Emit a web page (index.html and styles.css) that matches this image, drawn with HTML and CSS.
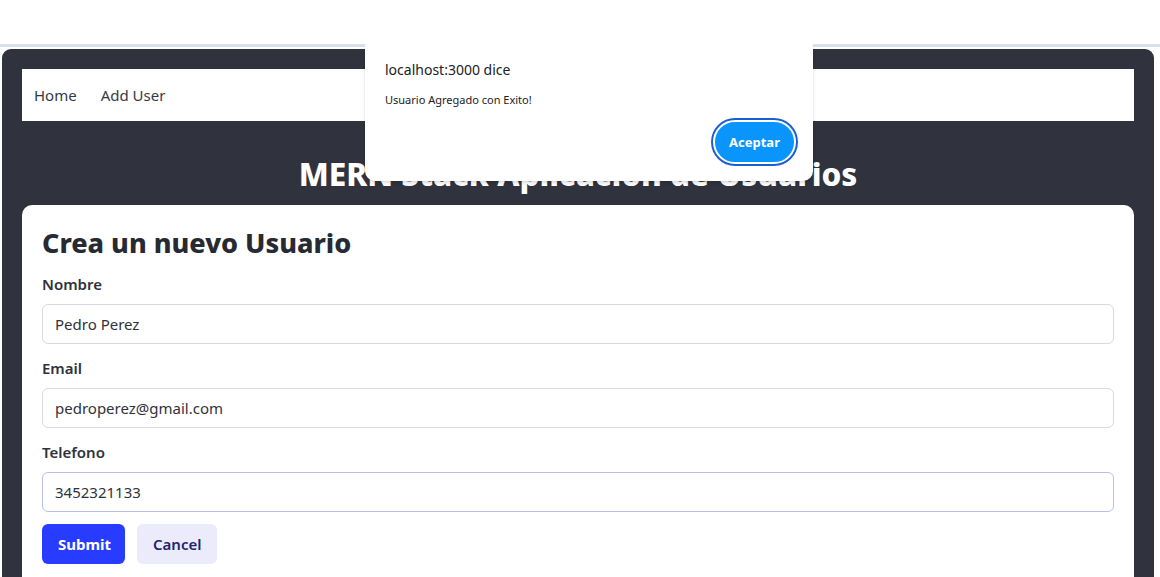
FILE: index.html
```html
<!DOCTYPE html>
<html lang="es">
<head>
<meta charset="utf-8">
<title>MERN Stack</title>
<link rel="stylesheet" href="styles.css">
</head>
<body>
<div class="browser-top"></div>
<div class="divider"></div>
<div class="app">
  <nav class="nav">
    <a class="nav-link" href="#">Home</a>
    <a class="nav-link" href="#">Add User</a>
  </nav>
  <h1 class="title">MERN Stack Aplicacion de Usuarios</h1>
  <div class="card">
    <h2 class="card-title">Crea un nuevo Usuario</h2>
    <form class="form">
      <div class="field">
        <label class="label">Nombre</label>
        <input class="input" type="text" value="Pedro Perez">
      </div>
      <div class="field">
        <label class="label">Email</label>
        <input class="input" type="text" value="pedroperez@gmail.com">
      </div>
      <div class="field">
        <label class="label">Telefono</label>
        <input class="input input-focus" type="text" value="3452321133">
      </div>
      <div class="actions">
        <button type="button" class="btn btn-primary">Submit</button>
        <button type="button" class="btn btn-secondary">Cancel</button>
      </div>
    </form>
  </div>
</div>

<div class="dialog">
  <div class="dialog-title">localhost:3000 dice</div>
  <div class="dialog-msg">Usuario Agregado con Exito!</div>
  <div class="dialog-actions">
    <button type="button" class="dialog-btn">Aceptar</button>
  </div>
</div>
</body>
</html>
```

FILE: styles.css
```css
* { box-sizing: border-box; }
html, body { margin: 0; padding: 0; background: #fff; }
body {
  font-family: "Noto Sans", "Open Sans", sans-serif;
  height: 577px;
  overflow: hidden;
  position: relative;
}
.browser-top { height: 44px; background: #fff; }
.divider { height: 3px; background: #d8e1ea; margin-bottom: 2px; }
.app {
  margin: 0 6px 0 2px;
  background: #30333e;
  border-radius: 9px 9px 0 0;
  padding: 20px 20px 0 20px;
  height: 540px;
}
.nav {
  background: #fff;
  height: 52px;
  display: flex;
  align-items: center;
  padding: 0 12px;
  gap: 24px;
}
.nav-link {
  color: #343a45;
  text-decoration: none;
  font-size: 15px;
}
.title {
  margin: 0;
  height: 84px;
  display: flex;
  align-items: center;
  justify-content: center;
  color: #fff;
  font-size: 31.5px;
  font-weight: 800;
  padding-top: 20px;
}
.card {
  background: #fff;
  border-radius: 10px 10px 0 0;
  padding: 20px;
  height: 380px;
}
.card-title {
  margin: 0 0 11px 0;
  font-size: 27px;
  line-height: 36px;
  font-weight: 800;
  color: #272a33;
}
.field { margin-bottom: 12px; }
.label {
  display: block;
  font-size: 15px;
  line-height: 24px;
  font-weight: 600;
  color: #2f323b;
  margin-bottom: 8px;
}
.input {
  display: block;
  width: 100%;
  height: 40px;
  border: 1px solid #d7d8e2;
  border-radius: 6px;
  padding: 0 12px;
  font-family: inherit;
  font-size: 15px;
  color: #2f323b;
  background: #fff;
  outline: none;
}
.input-focus { border-color: #b9bfe9; }
.actions { display: flex; gap: 12px; }
.btn {
  height: 40px;
  border: none;
  border-radius: 6px;
  font-family: inherit;
  font-size: 15px;
  font-weight: 700;
  padding: 0 16px;
}
.btn-primary { background: #283cff; color: #fff; width: 83px; }
.btn-secondary { background: #ebebfc; color: #1f2372; font-weight: 600; width: 80px; }

.dialog {
  position: absolute;
  left: 365px;
  top: 44px;
  width: 448px;
  height: 137px;
  background: #fff;
  border-radius: 0 0 10px 10px;
  box-shadow: 0 2px 4px -1px rgba(0,0,0,0.2), 1px 0 1px -1px rgba(0,0,0,0.1), -1px 0 1px -1px rgba(0,0,0,0.1);
  padding: 16px 20px 0 20px;
}
.dialog-title {
  font-size: 14px;
  color: #202124;
  line-height: 20px;
}
.dialog-msg {
  margin-top: 12px;
  font-size: 11px;
  color: #202124;
  line-height: 16px;
}
.dialog-actions {
  display: flex;
  justify-content: flex-end;
  margin-top: 12px;
}
.dialog-btn {
  width: 83px;
  height: 44px;
  border-radius: 22px;
  background: #0995fb;
  border: 2px solid #fff;
  box-shadow: 0 0 0 2px #1a5ed2;
  color: #fff;
  font-family: inherit;
  font-size: 13px;
  font-weight: 700;
  margin-right: -3px;
}
```
